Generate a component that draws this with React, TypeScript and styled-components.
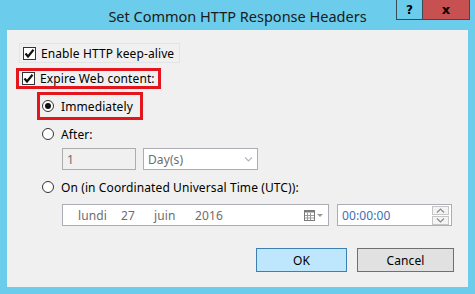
import styled, { createGlobalStyle } from 'styled-components';

const GlobalStyle = createGlobalStyle`
  html, body {
    margin: 0;
    padding: 0;
    background: #6bcdeb;
  }
  body {
    font-family: 'Noto Sans', 'Open Sans', sans-serif;
  }
`;

const Window = styled.div`
  width: 475px;
  height: 294px;
  background: #6bcdeb;
  display: flex;
  flex-direction: column;
  box-sizing: border-box;
`;

const TitleBar = styled.div`
  position: relative;
  height: 30px;
  display: flex;
  align-items: center;
  justify-content: center;
  font-size: 14.5px;
  color: #1a1a1a;
`;

const TitleText = styled.span`
  margin-top: 2px;
`;

const Controls = styled.div`
  position: absolute;
  top: 0;
  right: 5px;
  display: flex;
`;

const CtrlButton = styled.div<{ $close?: boolean }>`
  width: ${(p) => (p.$close ? 47 : 27)}px;
  height: 20px;
  box-sizing: border-box;
  border: 1px solid #3b4a55;
  border-top: none;
  border-left-width: ${(p) => (p.$close ? 0 : 1)}px;
  background: ${(p) => (p.$close ? '#c75050' : '#6bcdeb')};
  display: flex;
  align-items: center;
  justify-content: center;
  font-family: 'DejaVu Sans', sans-serif;
  font-weight: bold;
  font-size: ${(p) => (p.$close ? 13 : 12)}px;
  color: #000;
`;

const Client = styled.div`
  margin: 0 7px 7px 7px;
  flex: 1;
  background: #f0f0f0;
  display: flex;
  flex-direction: column;
  padding-left: 15px;
  font-size: 12px;
  letter-spacing: 0.1px;
  color: #000;
`;

const Row = styled.div<{ $top: number; $indent?: number; $h?: number }>`
  display: flex;
  align-items: center;
  margin-top: ${(p) => p.$top}px;
  margin-left: ${(p) => p.$indent ?? 0}px;
  height: ${(p) => p.$h ?? 20}px;
`;

// red annotation frame drawn around a highlighted option
const Highlight = styled.div<{ $top: number; $indent: number; $w: number; $h: number; $pl?: number }>`
  display: flex;
  align-items: center;
  box-sizing: border-box;
  margin-top: ${(p) => p.$top}px;
  margin-left: ${(p) => p.$indent}px;
  width: ${(p) => p.$w}px;
  height: ${(p) => p.$h}px;
  border: 3px solid #e3161d;
  padding-left: ${(p) => p.$pl ?? 3}px;
`;

const Focus = styled.div`
  display: flex;
  align-items: center;
  height: 20px;
  padding: 0 5px 0 3px;
  margin-left: -3px;
  border: 1px solid #e4e4e4;
  box-sizing: border-box;
`;

const CheckBox = styled.span`
  width: 13px;
  height: 13px;
  box-sizing: border-box;
  border: 1px solid #333;
  background: #fff;
  display: inline-flex;
  align-items: center;
  justify-content: center;
  margin-right: 5px;
  flex-shrink: 0;
`;

const Radio = styled.span<{ $on?: boolean }>`
  width: 12px;
  height: 12px;
  box-sizing: border-box;
  border: 1px solid #333;
  border-radius: 50%;
  background: #fff;
  display: inline-flex;
  align-items: center;
  justify-content: center;
  margin-right: 7px;
  flex-shrink: 0;
  &::after {
    content: '';
    display: ${(p) => (p.$on ? 'block' : 'none')};
    width: 6px;
    height: 6px;
    border-radius: 50%;
    background: #111;
  }
`;

const Label = styled.span`
  white-space: nowrap;
`;

const Field = styled.div<{ $w: number; $disabled?: boolean; $gap?: number }>`
  width: ${(p) => p.$w}px;
  height: 22px;
  margin-left: ${(p) => p.$gap ?? 0}px;
  box-sizing: border-box;
  border: 1px solid ${(p) => (p.$disabled ? '#adadad' : '#abadb3')};
  background: ${(p) => (p.$disabled ? '#f0f0f0' : '#fff')};
  display: flex;
  align-items: center;
  padding: 0 4px;
  color: #6d6d6d;
`;

const DateField = styled(Field)`
  padding-left: 15px;
`;

const DateSeg = styled.span<{ $w: number }>`
  display: inline-block;
  width: ${(p) => p.$w}px;
`;

const Spacer = styled.div`
  flex: 1;
`;

const TimeText = styled.span`
  color: #3c6fb4;
`;

const Spinner = styled.div`
  display: flex;
  flex-direction: column;
  gap: 1px;
  margin-right: -2px;
`;

const SpinBtn = styled.div`
  width: 17px;
  height: 9px;
  box-sizing: border-box;
  border: 1px solid #c6c6c6;
  background: #f4f4f4;
  display: flex;
  align-items: center;
  justify-content: center;
`;

const Buttons = styled.div`
  display: flex;
  justify-content: flex-end;
  gap: 10px;
  margin-top: 22px;
  margin-right: 14px;
`;

const DlgButton = styled.div<{ $primary?: boolean }>`
  width: ${(p) => (p.$primary ? 91 : 97)}px;
  height: 24px;
  box-sizing: border-box;
  border: 1px solid ${(p) => (p.$primary ? '#3c7fb1' : '#707070')};
  background: ${(p) => (p.$primary ? '#bee6fd' : '#e1e1e1')};
  display: flex;
  align-items: center;
  justify-content: center;
  font-size: 12px;
  color: #000;
`;

const Check = () => (
  <svg width="11" height="11" viewBox="0 0 11 11">
    <path d="M1.5 5.5 L4 8.5 L9.5 1.8" stroke="#111" strokeWidth="2.2" fill="none" />
  </svg>
);

const Chevron = ({ up = false, color = '#b8b8b8' }: { up?: boolean; color?: string }) => (
  <svg width="9" height="5" viewBox="0 0 9 5">
    <path d={up ? 'M1 4.5 L4.5 1 L8 4.5' : 'M1 0.5 L4.5 4 L8 0.5'} stroke={color} strokeWidth="1.2" fill="none" />
  </svg>
);

const CalendarIcon = () => (
  <svg width="20" height="11" viewBox="0 0 20 11">
    <rect x="0.5" y="0.5" width="10" height="10" fill="#fff" stroke="#7a7a7a" />
    <rect x="0.5" y="0.5" width="10" height="2" fill="#7a7a7a" />
    <path d="M3.5 3v7M6.5 3v7M1 5.5h9M1 8h9" stroke="#9a9a9a" strokeWidth="1" />
    <path d="M13 4 L19 4 L16 7 Z" fill="#9a9a9a" />
  </svg>
);

export default function App() {
  return (
    <Window>
      <GlobalStyle />
      <TitleBar>
        <TitleText>Set Common HTTP Response Headers</TitleText>
        <Controls>
          <CtrlButton>?</CtrlButton>
          <CtrlButton $close>x</CtrlButton>
        </Controls>
      </TitleBar>
      <Client>
        <Row $top={13}>
          <Focus>
            <CheckBox>
              <Check />
            </CheckBox>
            <Label>Enable HTTP keep-alive</Label>
          </Focus>
        </Row>
        <Highlight $top={5} $indent={-6} $w={145} $h={21} $pl={3}>
          <CheckBox>
            <Check />
          </CheckBox>
          <Label>Expire Web content:</Label>
        </Highlight>
        <Highlight $top={3} $indent={15} $w={106} $h={28} $pl={2}>
          <Radio $on />
          <Label>Immediately</Label>
        </Highlight>
        <Row $top={4} $indent={20}>
          <Radio />
          <Label>After:</Label>
        </Row>
        <Row $top={4} $indent={40} $h={22}>
          <Field $w={74} $disabled>1</Field>
          <Field $w={115} $gap={7}>
            Day(s)
            <Spacer />
            <Chevron />
          </Field>
        </Row>
        <Row $top={7} $indent={20}>
          <Radio />
          <Label>On (in Coordinated Universal Time (UTC)):</Label>
        </Row>
        <Row $top={7} $indent={40} $h={22}>
          <DateField $w={267}>
            <DateSeg $w={43}>lundi</DateSeg>
            <DateSeg $w={33}>27</DateSeg>
            <DateSeg $w={41}>juin</DateSeg>
            <DateSeg $w={30}>2016</DateSeg>
            <Spacer />
            <CalendarIcon />
          </DateField>
          <Field $w={115} $gap={8}>
            <TimeText>00:00:00</TimeText>
            <Spacer />
            <Spinner>
              <SpinBtn>
                <Chevron up color="#8a8a8a" />
              </SpinBtn>
              <SpinBtn>
                <Chevron color="#8a8a8a" />
              </SpinBtn>
            </Spinner>
          </Field>
        </Row>
        <Buttons>
          <DlgButton $primary>OK</DlgButton>
          <DlgButton>Cancel</DlgButton>
        </Buttons>
      </Client>
    </Window>
  );
}
